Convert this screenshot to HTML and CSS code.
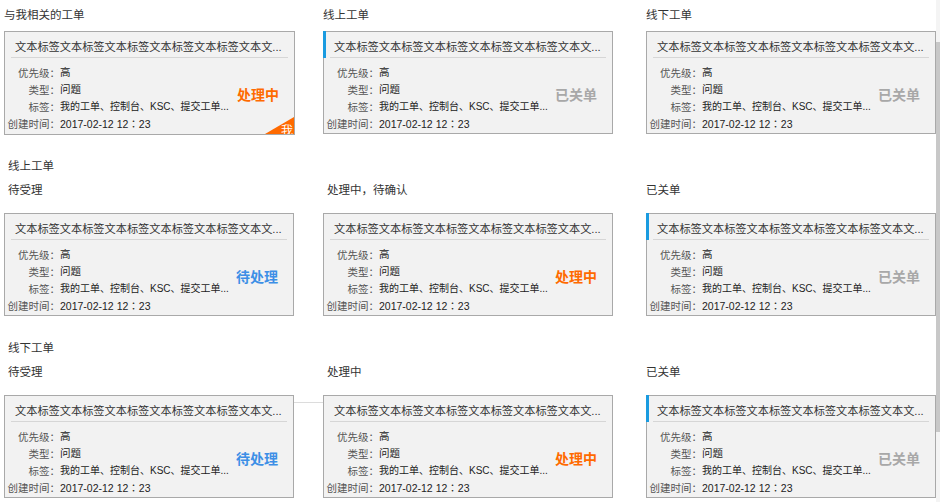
FILE: index.html
```html
<!DOCTYPE html>
<html lang="zh-CN">
<head>
<meta charset="utf-8">
<title>工单</title>
<link rel="stylesheet" href="styles.css">
</head>
<body>
<div class="page">
  <div class="row row-top">
    <div class="col">
      <div class="col-label">与我相关的工单</div>
      <div class="card has-corner">
        <div class="card-title">文本标签文本标签文本标签文本标签文本标签文本文...</div>
        <div class="card-body">
          <div class="fields">
            <div class="field"><span class="label">优先级<span class="colon">：</span></span><span class="value">高</span></div>
            <div class="field"><span class="label">类型<span class="colon">：</span></span><span class="value">问题</span></div>
            <div class="field"><span class="label">标签<span class="colon">：</span></span><span class="value tags">我的工单、控制台、KSC、提交工单...</span></div>
            <div class="field"><span class="label">创建时间<span class="colon">：</span></span><span class="value">2017-02-12 12<span class="colon">：</span>23</span></div>
          </div>
          <div class="status st-doing">处理中</div>
        </div>
        <div class="corner"><span>我</span></div>
      </div>
    </div>
    <div class="col">
      <div class="col-label">线上工单</div>
      <div class="card accent">
        <div class="card-title">文本标签文本标签文本标签文本标签文本标签文本文...</div>
        <div class="card-body">
          <div class="fields">
            <div class="field"><span class="label">优先级<span class="colon">：</span></span><span class="value">高</span></div>
            <div class="field"><span class="label">类型<span class="colon">：</span></span><span class="value">问题</span></div>
            <div class="field"><span class="label">标签<span class="colon">：</span></span><span class="value tags">我的工单、控制台、KSC、提交工单...</span></div>
            <div class="field"><span class="label">创建时间<span class="colon">：</span></span><span class="value">2017-02-12 12<span class="colon">：</span>23</span></div>
          </div>
          <div class="status st-closed">已关单</div>
        </div>
      </div>
    </div>
    <div class="col">
      <div class="col-label">线下工单</div>
      <div class="card">
        <div class="card-title">文本标签文本标签文本标签文本标签文本标签文本文...</div>
        <div class="card-body">
          <div class="fields">
            <div class="field"><span class="label">优先级<span class="colon">：</span></span><span class="value">高</span></div>
            <div class="field"><span class="label">类型<span class="colon">：</span></span><span class="value">问题</span></div>
            <div class="field"><span class="label">标签<span class="colon">：</span></span><span class="value tags">我的工单、控制台、KSC、提交工单...</span></div>
            <div class="field"><span class="label">创建时间<span class="colon">：</span></span><span class="value">2017-02-12 12<span class="colon">：</span>23</span></div>
          </div>
          <div class="status st-closed">已关单</div>
        </div>
      </div>
    </div>
  </div>

  <div class="section section-2">
    <div class="section-title">线上工单</div>
    <div class="row">
      <div class="col">
        <div class="sub-label indent">待受理</div>
        <div class="card">
          <div class="card-title">文本标签文本标签文本标签文本标签文本标签文本文...</div>
          <div class="card-body">
            <div class="fields">
              <div class="field"><span class="label">优先级<span class="colon">：</span></span><span class="value">高</span></div>
              <div class="field"><span class="label">类型<span class="colon">：</span></span><span class="value">问题</span></div>
              <div class="field"><span class="label">标签<span class="colon">：</span></span><span class="value tags">我的工单、控制台、KSC、提交工单...</span></div>
              <div class="field"><span class="label">创建时间<span class="colon">：</span></span><span class="value">2017-02-12 12<span class="colon">：</span>23</span></div>
            </div>
            <div class="status st-todo">待处理</div>
          </div>
        </div>
      </div>
      <div class="col">
        <div class="sub-label indent">处理中，待确认</div>
        <div class="card">
          <div class="card-title">文本标签文本标签文本标签文本标签文本标签文本文...</div>
          <div class="card-body">
            <div class="fields">
              <div class="field"><span class="label">优先级<span class="colon">：</span></span><span class="value">高</span></div>
              <div class="field"><span class="label">类型<span class="colon">：</span></span><span class="value">问题</span></div>
              <div class="field"><span class="label">标签<span class="colon">：</span></span><span class="value tags">我的工单、控制台、KSC、提交工单...</span></div>
              <div class="field"><span class="label">创建时间<span class="colon">：</span></span><span class="value">2017-02-12 12<span class="colon">：</span>23</span></div>
            </div>
            <div class="status st-doing">处理中</div>
          </div>
        </div>
      </div>
      <div class="col">
        <div class="sub-label">已关单</div>
        <div class="card accent">
          <div class="card-title">文本标签文本标签文本标签文本标签文本标签文本文...</div>
          <div class="card-body">
            <div class="fields">
              <div class="field"><span class="label">优先级<span class="colon">：</span></span><span class="value">高</span></div>
              <div class="field"><span class="label">类型<span class="colon">：</span></span><span class="value">问题</span></div>
              <div class="field"><span class="label">标签<span class="colon">：</span></span><span class="value tags">我的工单、控制台、KSC、提交工单...</span></div>
              <div class="field"><span class="label">创建时间<span class="colon">：</span></span><span class="value">2017-02-12 12<span class="colon">：</span>23</span></div>
            </div>
            <div class="status st-closed">已关单</div>
          </div>
        </div>
      </div>
    </div>
  </div>

  <div class="section section-3">
    <div class="section-title">线下工单</div>
    <div class="row row-line">
      <div class="col">
        <div class="sub-label indent">待受理</div>
        <div class="card">
          <div class="card-title">文本标签文本标签文本标签文本标签文本标签文本文...</div>
          <div class="card-body">
            <div class="fields">
              <div class="field"><span class="label">优先级<span class="colon">：</span></span><span class="value">高</span></div>
              <div class="field"><span class="label">类型<span class="colon">：</span></span><span class="value">问题</span></div>
              <div class="field"><span class="label">标签<span class="colon">：</span></span><span class="value tags">我的工单、控制台、KSC、提交工单...</span></div>
              <div class="field"><span class="label">创建时间<span class="colon">：</span></span><span class="value">2017-02-12 12<span class="colon">：</span>23</span></div>
            </div>
            <div class="status st-todo">待处理</div>
          </div>
        </div>
      </div>
      <div class="col">
        <div class="sub-label indent">处理中</div>
        <div class="card">
          <div class="card-title">文本标签文本标签文本标签文本标签文本标签文本文...</div>
          <div class="card-body">
            <div class="fields">
              <div class="field"><span class="label">优先级<span class="colon">：</span></span><span class="value">高</span></div>
              <div class="field"><span class="label">类型<span class="colon">：</span></span><span class="value">问题</span></div>
              <div class="field"><span class="label">标签<span class="colon">：</span></span><span class="value tags">我的工单、控制台、KSC、提交工单...</span></div>
              <div class="field"><span class="label">创建时间<span class="colon">：</span></span><span class="value">2017-02-12 12<span class="colon">：</span>23</span></div>
            </div>
            <div class="status st-doing">处理中</div>
          </div>
        </div>
      </div>
      <div class="col">
        <div class="sub-label">已关单</div>
        <div class="card accent">
          <div class="card-title">文本标签文本标签文本标签文本标签文本标签文本文...</div>
          <div class="card-body">
            <div class="fields">
              <div class="field"><span class="label">优先级<span class="colon">：</span></span><span class="value">高</span></div>
              <div class="field"><span class="label">类型<span class="colon">：</span></span><span class="value">问题</span></div>
              <div class="field"><span class="label">标签<span class="colon">：</span></span><span class="value tags">我的工单、控制台、KSC、提交工单...</span></div>
              <div class="field"><span class="label">创建时间<span class="colon">：</span></span><span class="value">2017-02-12 12<span class="colon">：</span>23</span></div>
            </div>
            <div class="status st-closed">已关单</div>
          </div>
        </div>
      </div>
    </div>
  </div>
</div>
<div class="scrollbar"><div class="thumb"></div></div>
</body>
</html>
```

FILE: styles.css
```css
html, body {
  margin: 0;
  padding: 0;
  background: #ffffff;
}

body {
  font-family: "Liberation Sans", "Noto Sans CJK SC", sans-serif;
  color: #333333;
  overflow: hidden;
}

.page {
  padding: 7px 0 0 4px;
}

.row {
  display: grid;
  grid-template-columns: 319px 323px 290px;
  position: relative;
}

.col-label,
.section-title,
.sub-label {
  font-size: 11.5px;
  line-height: 16px;
  color: #333333;
  white-space: nowrap;
}

.col-label {
  margin-bottom: 8px;
}

.section-2 {
  margin-top: 23px;
}

.section-3 {
  margin-top: 24px;
}

.section-title {
  padding-left: 4px;
  margin-bottom: 8px;
}

.sub-label {
  margin-bottom: 15px;
}

.sub-label.indent {
  padding-left: 4px;
}

/* thin rule visible between the first two cards of the last row */
.row-line::before {
  content: "";
  position: absolute;
  left: 290px;
  bottom: 95px;
  width: 29px;
  height: 1px;
  background: #dcdcdc;
}

.card {
  position: relative;
  box-sizing: border-box;
  width: 290px;
  height: 103px;
  border: 1px solid #a9a9a9;
  background: #f2f2f2;
}

.card.has-corner {
  width: 291px;
  height: 104px;
  overflow: hidden;
}

.card.accent::before {
  content: "";
  position: absolute;
  left: -1px;
  top: -1px;
  width: 3px;
  height: 27px;
  background: #1a9be0;
}

.card-title {
  margin: 0 6px;
  padding: 5px 0 0 4px;
  height: 20px;
  line-height: 20px;
  font-size: 11.2px;
  color: #333333;
  border-bottom: 1px solid #d6d6d6;
  white-space: nowrap;
  overflow: hidden;
}

.card-body {
  display: flex;
  align-items: flex-start;
  padding: 6px 15px 0 2px;
}

.fields {
  flex: 1;
  min-width: 0;
}

.field {
  display: flex;
  height: 17px;
  line-height: 17px;
  font-size: 10.5px;
  white-space: nowrap;
}

.label {
  width: 53px;
  flex: none;
  text-align: right;
  color: #555555;
}

.colon {
  font-family: "Noto Sans CJK JP", "Noto Sans CJK SC", sans-serif;
}

.value {
  color: #222222;
  overflow: hidden;
}

.value.tags {
  font-size: 10px;
}

.status {
  align-self: center;
  margin-bottom: 6px;
  font-size: 14px;
  font-weight: bold;
  line-height: 20px;
  white-space: nowrap;
}

.st-doing {
  color: #ff6a00;
}

.st-todo {
  color: #3d8fe6;
}

.st-closed {
  color: #a8a8a8;
}

.corner {
  position: absolute;
  right: 0;
  bottom: 0;
  width: 29px;
  height: 17px;
}

.corner::before {
  content: "";
  position: absolute;
  inset: 0;
  background: #ff6a00;
  clip-path: polygon(100% 0, 100% 100%, 0 100%);
}

.corner span {
  position: absolute;
  right: 1px;
  bottom: -3px;
  font-size: 12px;
  line-height: 12px;
  color: #ffffff;
}

.scrollbar {
  position: fixed;
  top: 0;
  right: 0;
  width: 4px;
  height: 100%;
  background: #f4f4f4;
}

.scrollbar .thumb {
  margin-top: 42px;
  height: 390px;
  background: #c8c8c8;
}
```
